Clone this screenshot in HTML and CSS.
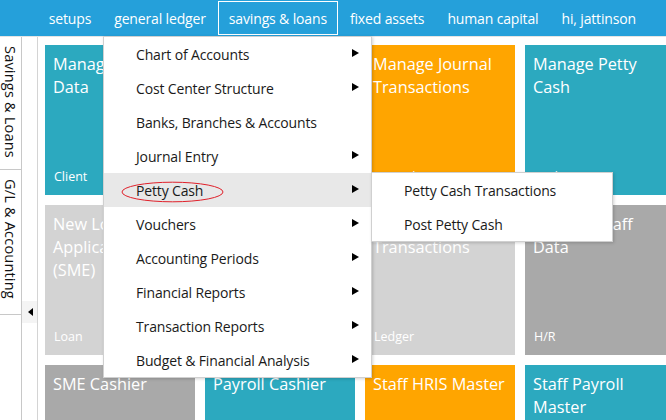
FILE: index.html
```html
<!DOCTYPE html>
<html>
<head>
<meta charset="utf-8">
<link rel="stylesheet" href="styles.css">
</head>
<body>
<div class="page">
  <header class="topbar">
    <nav class="nav">
      <a class="nav-item">setups</a>
      <a class="nav-item">general ledger</a>
      <a class="nav-item active">savings &amp; loans</a>
      <a class="nav-item">fixed assets</a>
      <a class="nav-item">human capital</a>
      <a class="nav-item">hi, jattinson</a>
    </nav>
  </header>
  <div class="main">
    <aside class="sidebar">
      <div class="vtab tab-savings">Savings &amp; Loans</div>
      <div class="vtab tab-gl">G/L &amp; Accounting</div>
    </aside>
    <div class="collapser">
      <div class="collapse-btn"><span class="tri-left"></span></div>
    </div>
    <section class="content">
      <div class="tiles">
        <div class="tile teal"><div class="t-title">Manage Client Data</div><div class="t-label">Client</div></div>
        <div class="tile orange"><div class="t-title">Manage Loan Products</div><div class="t-label">Loan</div></div>
        <div class="tile orange"><div class="t-title">Manage Journal Transactions</div><div class="t-label">Journal</div></div>
        <div class="tile teal"><div class="t-title">Manage Petty Cash</div><div class="t-label">Cash</div></div>

        <div class="tile light"><div class="t-title">New Loan Application<br>(SME)</div><div class="t-label">Loan</div></div>
        <div class="tile light"><div class="t-title">Loan Approvals</div><div class="t-label">Loan</div></div>
        <div class="tile light"><div class="t-title">Post Journal Transactions</div><div class="t-label">Ledger</div></div>
        <div class="tile dark"><div class="t-title">Manage Staff Data</div><div class="t-label">H/R</div></div>

        <div class="tile dark"><div class="t-title">SME Cashier</div><div class="t-label"></div></div>
        <div class="tile teal"><div class="t-title">Payroll Cashier</div><div class="t-label"></div></div>
        <div class="tile orange"><div class="t-title">Staff HRIS Master</div><div class="t-label"></div></div>
        <div class="tile teal"><div class="t-title">Staff Payroll Master</div><div class="t-label"></div></div>
      </div>
    </section>
  </div>

  <ul class="menu">
    <li class="m-item has-sub">Chart of Accounts</li>
    <li class="m-item has-sub">Cost Center Structure</li>
    <li class="m-item">Banks, Branches &amp; Accounts</li>
    <li class="m-item has-sub">Journal Entry</li>
    <li class="m-item has-sub hover">Petty Cash
      <svg class="circle" width="103" height="22" viewBox="0 0 103 22"><ellipse cx="51.5" cy="11" rx="50.5" ry="9.8" fill="none" stroke="#e0202a" stroke-width="1"/></svg>
    </li>
    <li class="m-item has-sub">Vouchers</li>
    <li class="m-item has-sub">Accounting Periods</li>
    <li class="m-item has-sub">Financial Reports</li>
    <li class="m-item has-sub">Transaction Reports</li>
    <li class="m-item has-sub">Budget &amp; Financial Analysis</li>
  </ul>

  <ul class="submenu">
    <li class="m-item">Petty Cash Transactions</li>
    <li class="m-item">Post Petty Cash</li>
  </ul>
</div>
</body>
</html>
```

FILE: styles.css
```css
html, body {
  margin: 0;
  padding: 0;
  overflow: hidden;
  background: #fff;
}
body {
  font-family: "Open Sans", "Noto Sans", "DejaVu Sans", sans-serif;
  width: 666px;
  height: 420px;
}
.page {
  position: relative;
  width: 666px;
  height: 420px;
  overflow: hidden;
}
.topbar {
  height: 36px;
  background: #25a0da;
  border-bottom: 1px solid #e4e4e4;
  display: flex;
  justify-content: flex-end;
}
.nav {
  display: flex;
  gap: 1px;
  padding-right: 19px;
  align-items: stretch;
}
.nav-item {
  color: #fff;
  font-size: 14px;
  padding: 0 10px;
  display: flex;
  align-items: center;
  height: 34px;
  margin-top: 1px;
  border: 1px solid transparent;
  box-sizing: border-box;
  letter-spacing: -0.15px;
}
.nav-item.active {
  border-color: #fff;
}
.main {
  display: flex;
  height: 383px;
}
.sidebar {
  width: 21px;
  border-right: 1px solid #c8c8c8;
  display: flex;
  flex-direction: column;
}
.vtab {
  writing-mode: vertical-rl;
  font-size: 14.5px;
  color: #111;
  border-bottom: 1px solid #c8c8c8;
  display: flex;
  align-items: center;
  padding-top: 9px;
  box-sizing: border-box;
  line-height: 21px;
  letter-spacing: 0.2px;
}
.tab-savings { height: 133px; }
.tab-gl { height: 145px; }
.collapser {
  width: 15px;
  border-right: 1px solid #d4d4d4;
  display: flex;
  flex-direction: column;
}
.collapse-btn {
  margin-top: 264px;
  height: 22px;
  background: #f4f4f4;
  display: flex;
  align-items: center;
  justify-content: center;
  padding-left: 1px;
}
.tri-left {
  width: 0;
  height: 0;
  border-top: 4px solid transparent;
  border-bottom: 4px solid transparent;
  border-right: 5px solid #000;
}
.content {
  flex: 1;
  overflow: hidden;
  padding: 8px 0 0 7px;
}
.tiles {
  display: grid;
  grid-template-columns: repeat(4, 150px);
  grid-auto-rows: 150px;
  gap: 10px;
}
.tile {
  color: #fff;
  display: flex;
  flex-direction: column;
  justify-content: space-between;
  padding: 8px 8px 10px 8px;
  box-sizing: border-box;
}
.t-title {
  font-size: 16.3px;
  line-height: 23px;
}
.t-label {
  font-size: 12.5px;
  line-height: 16px;
  padding-left: 1px;
}
.teal { background: #2ca9bf; }
.orange { background: #ffa500; }
.light { background: #d3d3d3; }
.dark { background: #a9a9a9; }

.menu, .submenu {
  list-style: none;
  margin: 0;
  padding: 0;
  position: absolute;
  background: #fff;
  border: 1px solid #d0d0d0;
  box-shadow: 1px 1px 3px rgba(0,0,0,0.18);
}
.menu {
  left: 103px;
  top: 36px;
  width: 267px;
}
.submenu {
  left: 371px;
  top: 172px;
  width: 240px;
}
.m-item {
  position: relative;
  height: 34px;
  display: flex;
  align-items: center;
  padding-left: 32px;
  font-size: 14px;
  color: #1a1a1a;
  letter-spacing: -0.15px;
}
.m-item.hover {
  background: #e8e8e8;
}
.has-sub::after {
  content: "";
  position: absolute;
  right: 12px;
  top: 12px;
  border-top: 4.5px solid transparent;
  border-bottom: 4.5px solid transparent;
  border-left: 7px solid #000;
}
.circle {
  position: absolute;
  left: 17px;
  top: 8px;
}
```
